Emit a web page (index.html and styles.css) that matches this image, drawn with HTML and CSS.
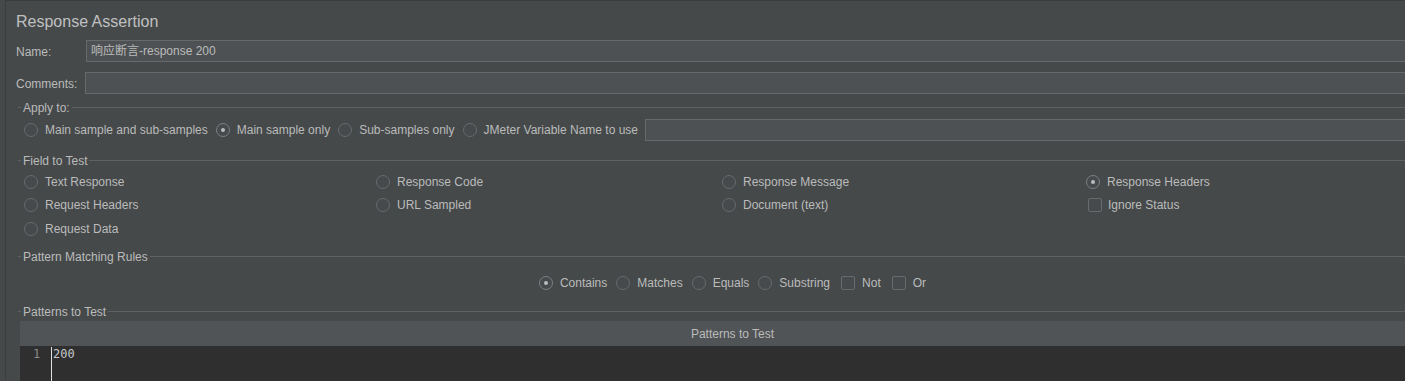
FILE: index.html
```html
<!DOCTYPE html>
<html>
<head>
<meta charset="utf-8">
<link rel="stylesheet" href="styles.css">
</head>
<body>
<div class="frame">
  <div class="title">Response Assertion</div>
  <div class="form-row first">
    <label class="form-label name-label">Name:</label>
    <div class="field">响应断言-response 200</div>
  </div>
  <div class="form-row">
    <label class="form-label comments-label">Comments:</label>
    <div class="field"></div>
  </div>

  <div class="group apply">
    <div class="legend"><span class="dash"></span><span class="legend-text">Apply to:</span><span class="line"></span></div>
    <div class="apply-row">
      <div class="opt"><span class="radio"></span><span>Main sample and sub-samples</span></div>
      <div class="opt"><span class="radio on"></span><span>Main sample only</span></div>
      <div class="opt"><span class="radio"></span><span>Sub-samples only</span></div>
      <div class="opt"><span class="radio"></span><span>JMeter Variable Name to use</span></div>
      <div class="field var-field"></div>
    </div>
  </div>

  <div class="group fields">
    <div class="legend"><span class="dash"></span><span class="legend-text">Field to Test</span><span class="line"></span></div>
    <div class="field-grid">
      <div class="opt"><span class="radio"></span><span>Text Response</span></div>
      <div class="opt"><span class="radio"></span><span>Response Code</span></div>
      <div class="opt"><span class="radio"></span><span>Response Message</span></div>
      <div class="opt"><span class="radio on"></span><span>Response Headers</span></div>
      <div class="opt"><span class="radio"></span><span>Request Headers</span></div>
      <div class="opt"><span class="radio"></span><span>URL Sampled</span></div>
      <div class="opt"><span class="radio"></span><span>Document (text)</span></div>
      <div class="opt cb-opt"><span class="check"></span><span>Ignore Status</span></div>
      <div class="opt last-row"><span class="radio"></span><span>Request Data</span></div>
    </div>
  </div>

  <div class="group rules">
    <div class="legend"><span class="dash"></span><span class="legend-text">Pattern Matching Rules</span><span class="line"></span></div>
    <div class="rules-row">
      <div class="opt"><span class="radio on"></span><span>Contains</span></div>
      <div class="opt"><span class="radio"></span><span>Matches</span></div>
      <div class="opt"><span class="radio"></span><span>Equals</span></div>
      <div class="opt"><span class="radio"></span><span>Substring</span></div>
      <div class="opt wide"><span class="check"></span><span>Not</span></div>
      <div class="opt wide"><span class="check"></span><span>Or</span></div>
    </div>
  </div>

  <div class="group patterns">
    <div class="legend"><span class="dash"></span><span class="legend-text">Patterns to Test</span><span class="line"></span></div>
    <div class="table">
      <div class="table-head">Patterns to Test</div>
      <div class="editor">
        <div class="gutter"><span class="ln">1</span></div>
        <div class="code">200</div>
      </div>
    </div>
  </div>
</div>
</body>
</html>
```

FILE: styles.css
```css
html, body {
  margin: 0;
  padding: 0;
}
body {
  background: #45494a;
  color: #bbbbbb;
  font-family: "Liberation Sans", Arial, "Noto Sans CJK SC", sans-serif;
  font-size: 12px;
  overflow: hidden;
  width: 1405px;
  height: 381px;
}
.frame {
  margin-left: 5px;
  border-left: 1px solid #3b3e40;
  border-top: 1px solid #3a3d3f;
  width: 1440px;
  height: 380px;
  padding-top: 11px;
  box-sizing: border-box;
}
.title {
  font-size: 16px;
  line-height: 20px;
  height: 20px;
  padding-left: 10px;
  color: #c0c0c0;
}
.form-row {
  display: flex;
  align-items: center;
  height: 22px;
  margin-top: 10px;
  padding-left: 10px;
}
.form-row.first {
  margin-top: 8px;
}
.form-label {
  flex: none;
  line-height: 14px;
  padding-top: 1px;
}
.name-label { width: 70px; }
.comments-label { width: 69px; }
.field {
  flex: 1;
  height: 22px;
  box-sizing: border-box;
  background: #4d5153;
  border: 1px solid #67696b;
  border-right: none;
  line-height: 21px;
  padding-left: 4px;
  font-family: "Liberation Sans", Arial, "Noto Sans CJK SC", sans-serif;
  color: #bbbbbb;
}
.group {
  margin-left: 14px;
}
.legend {
  display: flex;
  align-items: center;
  height: 12px;
  line-height: 12px;
  margin-left: -2px;
}
.dash {
  width: 3px;
  height: 1px;
  background: #5e6264;
  flex: none;
}
.legend-text {
  padding: 2px 2px 0;
  flex: none;
}
.line {
  flex: 1;
  height: 1px;
  background: #5e6264;
}
.apply { margin-top: 7px; }
.fields { margin-top: 13px; }
.rules { margin-top: 10px; }
.patterns { margin-top: 11px; }

.opt {
  display: flex;
  align-items: center;
  gap: 7px;
  height: 23px;
  white-space: nowrap;
}
.radio {
  flex: none;
  width: 14px;
  height: 14px;
  box-sizing: border-box;
  border-radius: 50%;
  border: 1px solid #686b6d;
  background: #464a4c;
  position: relative;
}
.radio.on {
  border-color: #7d8082;
}
.radio.on::after {
  content: "";
  position: absolute;
  left: 4px;
  top: 4px;
  width: 4px;
  height: 4px;
  border-radius: 50%;
  background: #bbbbbb;
}
.check {
  flex: none;
  width: 14px;
  height: 14px;
  box-sizing: border-box;
  border: 1px solid #686b6d;
  border-radius: 2px;
  background: #464a4c;
}
.apply-row {
  display: flex;
  align-items: center;
  gap: 8px;
  margin-top: 6px;
  padding-left: 4px;
  height: 22px;
}
.apply-row .opt { gap: 7px; }
.var-field {
  margin-left: -1px;
}
.field-grid {
  display: grid;
  grid-template-columns: 352px 346px 364px 1fr;
  margin-top: 4px;
  padding-left: 4px;
}
.last-row {
  padding-top: 1px;
}
.cb-opt {
  padding-left: 2px;
  gap: 6px;
}
.rules-row {
  display: flex;
  justify-content: center;
  gap: 9px;
  margin-top: 9px;
}
.rules-row .wide { margin-left: 2px; }
.table {
  margin-top: 4px;
}
.table-head {
  height: 25px;
  line-height: 23px;
  padding-top: 2px;
  box-sizing: border-box;
  background: #505456;
  text-align: center;
  color: #bbbbbb;
}
.editor {
  display: flex;
  background: #2f2f2f;
  height: 40px;
  font-family: "DejaVu Sans Mono", "Liberation Mono", monospace;
  font-size: 12px;
  line-height: 16px;
}
.gutter {
  width: 32px;
  box-sizing: border-box;
  text-align: left;
  padding-left: 13px;
  color: #8a8a8a;
  border-right: 1px solid #e0e0e0;
  margin-top: 1px;
}
.ln {
  display: block;
  margin-top: -1px;
}
.code {
  color: #c4c8cc;
  padding-left: 1px;
}
```
